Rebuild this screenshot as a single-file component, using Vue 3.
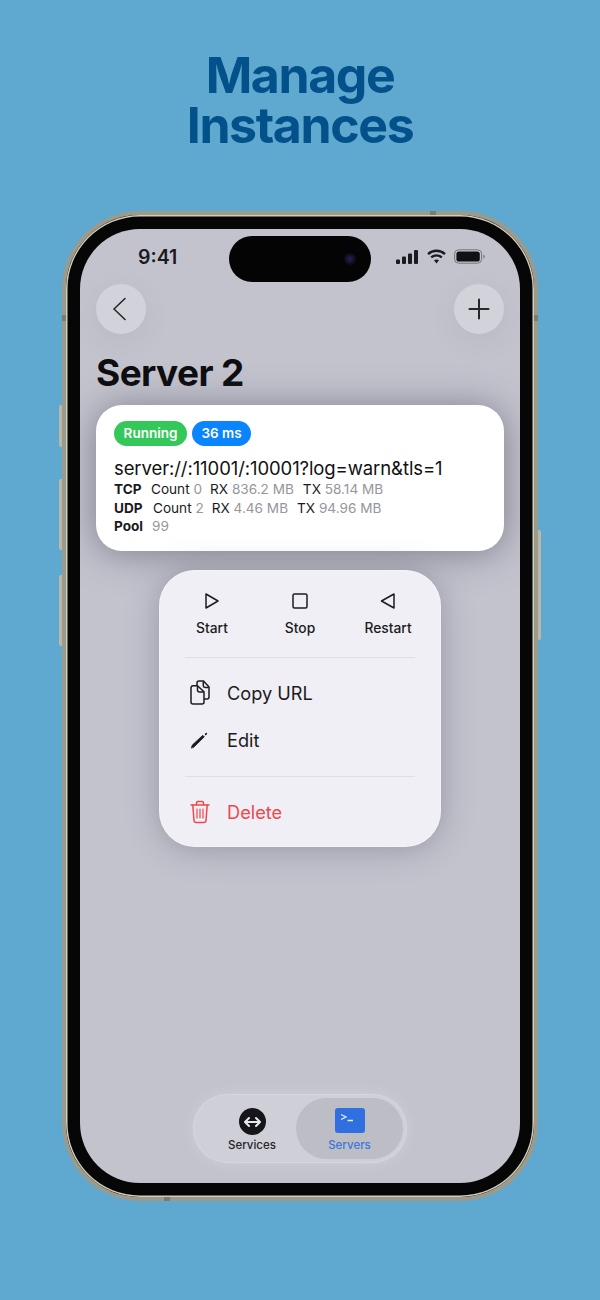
<script setup>
const stats = [
  { name: 'TCP', gap: 'g-tcp', count: '0', rx: '836.2 MB', tx: '58.14 MB' },
  { name: 'UDP', gap: 'g-udp', count: '2', rx: '4.46 MB', tx: '94.96 MB' }
]
</script>

<template>
  <main class="page">
    <h1 class="headline">Manage<br />Instances</h1>

    <div class="phone">
      <span class="side side-l1"></span>
      <span class="side side-l2"></span>
      <span class="side side-l3"></span>
      <span class="side side-r1"></span>
      <span class="band band-lt"></span>
      <span class="band band-rt"></span>
      <span class="band band-tr"></span>
      <span class="band band-bl"></span>

      <div class="screen">
        <div class="island"><span class="lens"></span></div>

        <header class="status">
          <span class="time">9:41</span>
          <div class="status-icons">
            <svg class="signal" width="22" height="14" viewBox="0 0 22 14" fill="#1a1a1f">
              <rect x="0" y="9.5" width="4" height="4.5" rx="1" />
              <rect x="6" y="6.500" width="4" height="7.500" rx="1" />
              <rect x="12" y="3.500" width="4" height="10.500" rx="1" />
              <rect x="18" y="0" width="4" height="14" rx="1" />
            </svg>
            <svg width="19" height="15" viewBox="0 0 19 15" fill="none" stroke="#1a1a1f" stroke-width="2.300">
              <path d="M1 5.200C5.800 .6 13.200 .6 18 5.200" />
              <path d="M4.200 8.400c3-2.800 7.600-2.800 10.600 0" />
              <path d="M9.500 14.500 7 11.300c1.500-1.200 3.500-1.200 5 0z" fill="#1a1a1f" stroke="none" />
            </svg>
            <svg width="31" height="15" viewBox="0 0 31 15" fill="none">
              <rect x=".6" y=".8" width="27" height="13.400" rx="4" stroke="#77777f" stroke-width="1" />
              <rect x="2.400" y="2.500" width="23.400" height="10" rx="2.600" fill="#111114" />
              <path d="M29.400 5.400c.9.3 1.400 1.100 1.400 2.100s-.5 1.800-1.400 2.100z" fill="#77777f" />
            </svg>
          </div>
        </header>

        <nav class="nav">
          <button class="round" aria-label="Back">
            <svg width="16" height="24" viewBox="0 0 16 24" fill="none" stroke="#26262b" stroke-width="1.600" stroke-linecap="round" stroke-linejoin="round">
              <path d="M12 1.500 1 12l11 10.500" />
            </svg>
          </button>
          <button class="round" aria-label="Add">
            <svg width="22" height="22" viewBox="0 0 22 22" fill="none" stroke="#26262b" stroke-width="2" stroke-linecap="round">
              <path d="M11 1.500v19M1.500 11h19" />
            </svg>
          </button>
        </nav>

        <h2 class="title">Server 2</h2>

        <section class="card">
          <div class="badges">
            <span class="badge green">Running</span>
            <span class="badge blue">36 ms</span>
          </div>
          <p class="url">server://:11001/:10001?log=warn&amp;tls=1</p>
          <div v-for="s in stats" :key="s.name" class="stat">
            <b :class="s.gap">{{ s.name }}</b>
            <span class="k">Count</span> <span class="v sep-count">{{ s.count }}</span>
            <span class="k">RX</span> <span class="v sep-rx">{{ s.rx }}</span>
            <span class="k">TX</span> <span class="v">{{ s.tx }}</span>
          </div>
          <div class="stat">
            <b class="g-pool">Pool</b>
            <span class="v">99</span>
          </div>
        </section>

        <section class="menu">
          <div class="actions">
            <div class="action">
              <svg width="20" height="20" viewBox="0 0 20 20" fill="none" stroke="#1c1c20" stroke-width="1.500" stroke-linejoin="round">
                <path d="M4 3v14l12-7z" />
              </svg>
              <span>Start</span>
            </div>
            <div class="action">
              <svg width="20" height="20" viewBox="0 0 20 20" fill="none" stroke="#1c1c20" stroke-width="1.500">
                <rect x="3" y="3" width="14" height="14" rx="1.500" />
              </svg>
              <span>Stop</span>
            </div>
            <div class="action">
              <svg width="20" height="20" viewBox="0 0 20 20" fill="none" stroke="#1c1c20" stroke-width="1.500" stroke-linejoin="round">
                <path d="M16 3v14L3.500 10z" />
              </svg>
              <span>Restart</span>
            </div>
          </div>

          <div class="divider first"></div>

          <div class="item copy">
            <svg class="item-icon" width="22" height="26" viewBox="0 0 22 26" fill="none" stroke="#1c1c20" stroke-width="1.500" stroke-linejoin="round">
              <path d="M9 6V3a2 2 0 0 1 2-2h4.500L21 7v10a2 2 0 0 1-2 2h-3" />
              <path d="M15.300 1.500v4a2 2 0 0 0 2 2h3.500" />
              <path d="M5 5.800h4.500l6.500 6V22a2 2 0 0 1-2 2H5a2 2 0 0 1-2-2V7.800a2 2 0 0 1 2-2z" />
              <path d="M9.500 6v4a2 2 0 0 0 2 2h4.300" />
            </svg>
            <span>Copy URL</span>
          </div>
          <div class="item edit">
            <svg class="item-icon" width="22" height="22" viewBox="0 0 22 22" fill="#1c1c20" stroke="#1c1c20" stroke-linecap="round" stroke-linejoin="round">
              <path d="M3.500 18.800 4.300 16 14.800 6.300 16.300 7.800 6 18z" stroke-width=".8" />
              <path d="M17.600 5.400 18.400 4.500" stroke-width="1.600" fill="none" />
            </svg>
            <span>Edit</span>
          </div>

          <div class="divider second"></div>

          <div class="item danger">
            <svg class="item-icon" width="22" height="24" viewBox="-1 0 22 24" fill="none" stroke="#f0474d" stroke-width="1.500" stroke-linecap="round" stroke-linejoin="round">
              <path d="M2 5h18" />
              <path d="M7.500 4.500V3a1.500 1.500 0 0 1 1.500-1.500h4A1.500 1.500 0 0 1 14.500 3v1.500" />
              <path d="M3.800 5 5 20.500A2.200 2.200 0 0 0 7.200 22.500h7.600a2.200 2.200 0 0 0 2.200-2L18.200 5" />
              <path d="M8 9v9M11 9v9M14 9v9" stroke-width="1.200" />
            </svg>
            <span>Delete</span>
          </div>
        </section>

        <div class="spacer"></div>

        <footer class="tabs">
          <div class="tab services">
            <span class="svc-icon">
              <svg width="19" height="12" viewBox="0 0 19 12" fill="none" stroke="#e8e8ee" stroke-width="2" stroke-linecap="round" stroke-linejoin="round">
                <path d="M3 6h13M6 2 2 6l4 4M13 2l4 4-4 4" />
              </svg>
            </span>
            <span class="tab-label">Services</span>
          </div>
          <div class="tab active">
            <span class="srv-icon">
              <svg width="30" height="25" viewBox="0 0 30 25" fill="none" stroke="#e8eefc" stroke-width="1.300">
                <path d="M6 6.500 11 9 6 11.500" />
                <path d="M12.500 12.500H18" />
              </svg>
            </span>
            <span class="tab-label">Servers</span>
          </div>
        </footer>
      </div>
    </div>
  </main>
</template>

<style>
html, body { margin: 0; background: #5fa8d0; }
</style>

<style scoped>
.page {
  width: 600px;
  height: 1300px;
  background: #5fa8d0;
  font-family: Inter, "Liberation Sans", sans-serif;
  overflow: hidden;
}
.headline {
  margin: 0;
  padding-top: 50px;
  height: 161px;
  text-align: center;
  color: #02518a;
  font-size: 50px;
  line-height: 50px;
  font-weight: 700;
  letter-spacing: -1.400px;
}
.phone {
  position: relative;
  box-sizing: border-box;
  width: 476px;
  height: 990px;
  margin-left: 62px;
  padding: 14px;
  border-radius: 78px;
  background: #060606;
  border: 4px solid #9c9a8b;
  box-shadow: inset 0 0 0 1.500px #cfcdbe;
}
.side {
  position: absolute;
  width: 3px;
  background: #b9b8a8;
}
.side-l1 { left: -7px; top: 190px; height: 42px; border-radius: 2px 0 0 2px; }
.side-l2 { left: -7px; top: 264px; height: 71px; border-radius: 2px 0 0 2px; }
.side-l3 { left: -7px; top: 360px; height: 71px; border-radius: 2px 0 0 2px; }
.side-r1 { right: -7px; top: 315px; height: 110px; border-radius: 0 2px 2px 0; }
.band { position: absolute; background: #7d7b70; }
.band-lt { left: -4px; top: 100px; width: 4px; height: 6px; }
.band-rt { right: -4px; top: 100px; width: 4px; height: 6px; }
.band-tr { right: 98px; top: -4px; width: 6px; height: 4px; }
.band-bl { left: 98px; bottom: -4px; width: 6px; height: 4px; }

.screen {
  position: relative;
  box-sizing: border-box;
  height: 954px;
  border-radius: 60px;
  background: #c3c3ce;
  display: flex;
  flex-direction: column;
  overflow: hidden;
  padding: 0 16px;
  color: #0e0e11;
}
.island {
  position: absolute;
  left: 149px;
  top: 7px;
  width: 142px;
  height: 46px;
  border-radius: 23px;
  background: #040405;
}
.lens {
  position: absolute;
  right: 15px;
  top: 17px;
  width: 12px;
  height: 12px;
  border-radius: 50%;
  background: radial-gradient(circle, #23235a 0, #0c0c1c 60%, #040405 100%);
}
.status {
  height: 55px;
  display: flex;
  align-items: center;
  justify-content: space-between;
  padding: 0 0 0 42px;
  box-sizing: border-box;
}
.time {
  font-size: 19.500px;
  font-weight: 600;
  color: #1a1a1f;
}
.status-icons {
  display: flex;
  align-items: center;
  gap: 8px;
  margin-right: 19px;
}
.signal { margin-right: 1px; }
.nav {
  display: flex;
  justify-content: space-between;
}
.round {
  width: 50px;
  height: 50px;
  padding: 0;
  border: 0;
  border-radius: 50%;
  background: #d2d2da;
  display: flex;
  align-items: center;
  justify-content: center;
  box-shadow: 0 8px 24px rgba(120, 120, 135, .12);
}
.title {
  margin: 15px 0 0;
  font-size: 37px;
  line-height: 48px;
  font-weight: 700;
  letter-spacing: -.6px;
}
.card {
  margin-top: 8px;
  height: 146px;
  box-sizing: border-box;
  padding: 16px 18px 0;
  background: #fff;
  border-radius: 26px;
  box-shadow: 0 2px 36px rgba(70, 70, 85, .55);
}
.badges { display: flex; gap: 5px; }
.badge {
  height: 25px;
  line-height: 25px;
  border-radius: 13px;
  color: #fff;
  font-size: 13.500px;
  font-weight: 600;
  text-align: center;
}
.green { width: 73px; background: #34c759; }
.blue { width: 59px; background: #0a84ff; }
.url {
  margin: 10px 0 0;
  font-size: 18.500px;
  line-height: 24px;
  letter-spacing: -.09px;
  color: #111;
}
.stat {
  height: 18.500px;
  line-height: 18.500px;
  font-size: 13.600px;
  white-space: nowrap;
  color: #1a1a1d;
}
.stat b { display: inline-block; font-weight: 700; }
.g-tcp { width: 37px; }
.g-udp { width: 39px; }
.g-pool { width: 38px; }
.k { font-weight: 400; }
.v { color: #96969b; }
.sep-count { margin-right: 8px; }
.sep-rx { margin-right: 9px; }

.menu {
  width: 282px;
  height: 277px;
  box-sizing: border-box;
  margin: 19px 0 0 63px;
  padding: 0 26px;
  background: #efeff5;
  border-radius: 36px;
  box-shadow: 0 2px 32px rgba(80, 80, 95, .38), inset 0 0 0 1px rgba(255, 255, 255, .35);
}
.actions {
  display: flex;
  justify-content: space-between;
  padding-top: 21px;
  margin: 0 -8px;
}
.action {
  width: 70px;
  display: flex;
  flex-direction: column;
  align-items: center;
  gap: 9px;
  font-size: 13.800px;
  line-height: 16px;
  font-weight: 500;
  color: #1c1c20;
}
.divider { height: 1px; background: #dfdfe5; }
.divider.first { margin-top: 21px; }
.divider.second { margin-top: 23px; }
.item {
  display: flex;
  align-items: center;
  gap: 17px;
  font-size: 18.200px;
  line-height: 26px;
  color: #1c1c20;
}
.item-icon { flex: none; margin-left: 3px; }
.copy { margin-top: 22px; }
.edit { margin-top: 21px; }
.danger { margin-top: 22px; color: #f0474d; }

.spacer { flex: 1; }
.tabs {
  align-self: center;
  display: flex;
  width: 214px;
  height: 69px;
  box-sizing: border-box;
  padding: 4px;
  margin-bottom: 20px;
  border-radius: 35px;
  background: #cfcfd7;
  box-shadow: 0 0 14px rgba(225, 225, 232, .4), inset 0 0 0 1px rgba(225, 225, 232, .4);
}
.tab {
  flex: 1;
  display: flex;
  flex-direction: column;
  align-items: center;
  padding-top: 10px;
  box-sizing: border-box;
  border-radius: 31px;
  font-size: 11.500px;
  font-weight: 500;
  color: #25252b;
}
.tab.services { padding-left: 11px; }
.tab.active {
  flex: 0 0 107px;
  background: #bdbdc6;
  color: #3b76dd;
}
.tab-label { line-height: 14px; }
.svc-icon {
  width: 27px;
  height: 27px;
  margin-bottom: 3px;
  border-radius: 50%;
  background: #15151a;
  display: flex;
  align-items: center;
  justify-content: center;
}
.srv-icon {
  width: 30px;
  height: 25px;
  margin-bottom: 5px;
  border-radius: 3px;
  background: #2f6fe0;
}
.srv-icon svg { display: block; }
</style>
